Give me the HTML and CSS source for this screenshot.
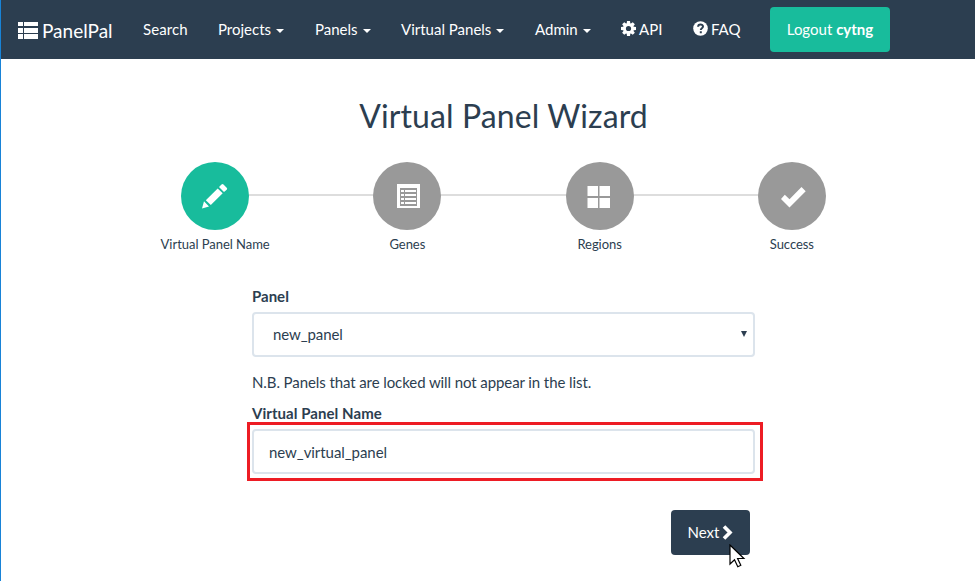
FILE: index.html
```html
<!DOCTYPE html>
<html lang="en">
<head>
<meta charset="utf-8">
<title>PanelPal</title>
<link rel="stylesheet" href="styles.css">
</head>
<body>
<nav class="navbar">
  <a class="brand"><svg class="brand-icon" width="20" height="18" viewBox="0 0 20 18" fill="currentColor"><path d="M0 0h5v4H0zM6 0h14v4H6zM0 6h5v5H0zM6 6h14v5H6zM0 12h5v5H0zM6 12h14v5H6z"/></svg><span class="brand-name">PanelPal</span></a>
  <a class="nav-link search">Search</a>
  <a class="nav-link projects">Projects<i class="caret"></i></a>
  <a class="nav-link panels">Panels<i class="caret"></i></a>
  <a class="nav-link virtual">Virtual Panels<i class="caret"></i></a>
  <a class="nav-link admin">Admin<i class="caret"></i></a>
  <a class="nav-link api"><svg width="15" height="15" viewBox="0 0 15 15"><g fill="currentColor"><path d="M6 0h3l.5 4h-4zM6 15h3l.5-4h-4zM0 6v3l4 .5v-4zM15 6v3l-4 .5v-4z"/><path d="M6 0h3l.5 4h-4zM6 15h3l.5-4h-4zM0 6v3l4 .5v-4zM15 6v3l-4 .5v-4z" transform="rotate(45 7.5 7.5)"/></g><circle cx="7.5" cy="7.5" r="4" fill="none" stroke="currentColor" stroke-width="2.8"/></svg><span>API</span></a>
  <a class="nav-link faq"><svg width="15" height="15" viewBox="0 0 15 15"><circle cx="7.5" cy="7.5" r="7.3" fill="currentColor"/><path d="M5.100 5.800C5.100 2.500 10 2.700 10 5.600c0 1.800-2.200 1.600-2.200 3.400M6.800 11.200h2" fill="none" stroke="#2c3e50" stroke-width="2"/></svg><span>FAQ</span></a>
  <a class="logout">Logout <b>cytng</b></a>
</nav>
<main class="wizard">
  <h1 class="title">Virtual Panel Wizard</h1>
  <ol class="steps">
    <li class="step active">
      <span class="circle"><svg width="28" height="28" viewBox="0 0 28 28" fill="#fff"><path d="M1 26.500l2-7.200 5 5.200zM4.800 18.300L16.700 6.400l5 4.800L9.800 23.100zM18 5.100l2.500-2.500q1-1 2 0l3.200 3.200q1 1 0 2L23 10z"/></svg></span>
      <span class="label">Virtual Panel Name</span>
    </li>
    <li class="step">
      <span class="circle"><svg width="28" height="28" viewBox="0 0 28 28"><path d="M4 2h23v24H4z" fill="#fff"/><path d="M7 6h17v18H7z" fill="#999"/><path d="M8 8h3v2H8zM12 8h11v2H12zM8 12h3v2H8zM12 12h11v2H12zM8 16h3v2H8zM12 16h11v2H12zM8 20h3v2H8zM12 20h11v2H12z" fill="#fff"/></svg></span>
      <span class="label">Genes</span>
    </li>
    <li class="step">
      <span class="circle"><svg width="28" height="28" viewBox="0 0 28 28" fill="#fff"><path d="M1.500 4h10.500v10H1.500zM13.500 4H24v10H13.500zM1.500 16h10.500v10H1.500zM13.500 16H24v10H13.500z"/></svg></span>
      <span class="label">Regions</span>
    </li>
    <li class="step">
      <span class="circle"><svg width="28" height="28" viewBox="0 0 28 28" fill="#fff"><path d="M3 17l3.800-4.200 4.700 4.400L23.500 5l4.200 4.200L11.500 25.500z"/></svg></span>
      <span class="label">Success</span>
    </li>
  </ol>
  <form class="form">
    <label class="field-label">Panel</label>
    <div class="control select"><span>new_panel</span><i class="arrow"></i></div>
    <p class="note">N.B. Panels that are locked will not appear in the list.</p>
    <label class="field-label name-label">Virtual Panel Name</label>
    <div class="highlight"><div class="control input">new_virtual_panel</div></div>
    <div class="actions">
      <div class="next"><span>Next</span><svg width="11" height="15" viewBox="0 0 11 15"><path d="M2 1.500l6 6-6 6" fill="none" stroke="#fff" stroke-width="3.600"/></svg>
        <svg class="cursor" width="18" height="24" viewBox="0 0 18 24"><path d="M1 1v19l4.500-4.300 3.300 7 3-1.400-3.200-6.800h6.300z" fill="#fff" stroke="#000" stroke-width="1.200"/></svg>
      </div>
    </div>
  </form>
</main>
</body>
</html>
```
FILE: styles.css
```css
* { box-sizing: border-box; }
body {
  margin: 0;
  height: 581px;
  overflow: hidden;
  border-left: 1px solid #1883d7;
  background: #fff;
  color: #2c3e50;
  font: 15px/21px Lato, sans-serif;
}
.navbar {
  display: flex;
  align-items: center;
  height: 59px;
  padding-left: 17px;
  background: #2c3e50;
  color: #fff;
}
.brand { display: flex; align-items: center; gap: 4px; width: 125px; font-size: 19px; }
.brand-icon { position: relative; top: 1px; }
.brand-name { padding-top: 2px; }
.nav-link { display: flex; align-items: center; gap: 3px; white-space: nowrap; }
.search { width: 75px; letter-spacing: 0.1px; }
.projects { width: 97px; }
.panels { width: 86px; }
.virtual { width: 134px; }
.admin { width: 86px; }
.api { width: 72px; }
.faq { width: 77px; }
.nav-link svg { position: relative; top: -1px; }
.caret {
  margin: 3px 0 0 2px;
  border: 4px solid transparent;
  border-top-color: #fff;
  border-bottom: 0;
}
.logout {
  width: 120px;
  height: 45px;
  border-radius: 4px;
  background: #18bc9c;
  line-height: 45px;
  text-align: center;
}
.wizard { width: 769px; margin-left: 118px; }
.title { margin: 0; padding-top: 39px; font-size: 32px; font-weight: 400; line-height: 36px; letter-spacing: 0.1px; text-align: center; }
.steps {
  display: grid;
  grid-template-columns: repeat(4, 1fr);
  margin: 28px 0 0;
  padding: 0;
  list-style: none;
}
.step { position: relative; display: flex; flex-direction: column; align-items: center; }
.step + .step::before {
  content: "";
  position: absolute;
  top: 32px;
  right: 50%;
  width: 100%;
  height: 2px;
  background: #ddd;
}
.circle {
  position: relative;
  z-index: 1;
  display: flex;
  align-items: center;
  justify-content: center;
  width: 68px;
  height: 68px;
  border-radius: 50%;
  background: #999;
}
.step.active .circle { background: #18bc9c; }
.step.active { z-index: 2; }
.step:nth-child(2) { z-index: 1; }
.label { margin-top: 4px; font-size: 13px; line-height: 20px; letter-spacing: -0.04px; }
.form { width: 503px; margin: 32px 0 0 133px; }
.field-label { display: block; font-weight: 700; }
.name-label { letter-spacing: 0.05px; }
.control {
  display: flex;
  align-items: center;
  height: 45px;
  padding: 0 15px;
  border: 2px solid #dce4ec;
  border-radius: 4px;
}
.select { justify-content: space-between; margin-top: 5px; padding: 0 6px 0 19px; letter-spacing: -0.1px; }
.input { padding-top: 2px; letter-spacing: -0.06px; }
.arrow { margin-top: -1px; border: 3px solid transparent; border-top: 6px solid #2c3e50; border-bottom: 0; }
.note { margin: 15px 0 10px; letter-spacing: -0.09px; }
.highlight { margin: -2px -8px 0 -5px; padding: 4px 5px 4px 2px; border: 3px solid #ed1c24; }
.actions { display: flex; justify-content: flex-end; margin: 29px 5px 0 0; }
.next {
  position: relative;
  display: flex;
  align-items: center;
  justify-content: center;
  gap: 3px;
  width: 79px;
  height: 45px;
  border-radius: 4px;
  background: #2c3e50;
  color: #fff;
}
.cursor { position: absolute; left: 58px; top: 34px; }
```
